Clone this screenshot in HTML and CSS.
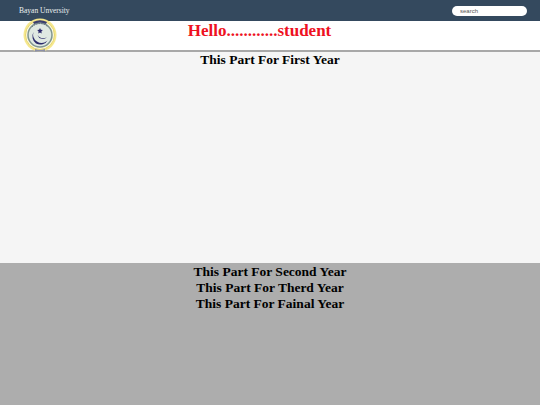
FILE: index.html
```html
<!DOCTYPE html>
<html lang="en">
<head>
<meta charset="utf-8">
<title>Bayan University</title>
<link rel="stylesheet" href="styles.css">
</head>
<body>
<header class="topbar">
  <span class="brand">Bayan Unversity</span>
  <input class="search" type="text" value="search" aria-label="search">
</header>
<div class="hero">
  <svg class="logo" viewBox="0 0 34 34" width="34" height="34" aria-hidden="true">
    <circle cx="17" cy="17" r="16.500" fill="#f6e88e"/>
    <circle cx="17" cy="17" r="14.500" fill="#fbf8df" stroke="#e6d66e" stroke-width="1"/>
    <circle cx="17" cy="17" r="12" fill="#dfe8e2" stroke="#7f958f" stroke-width="1.500"/>
    <path d="M10 4 A15 15 0 0 1 24 4 L23 6 A13 13 0 0 0 11 6 Z" fill="#3b3f6e"/>
    <path d="M12 31 A15 15 0 0 0 22 31 L22 33.500 H12 Z" fill="#8b8fa8"/>
    <path d="M9 9 A11 11 0 0 1 25 9" fill="none" stroke="#5c6a80" stroke-width="1" stroke-dasharray="1.500 1"/>
    <path d="M24 23 A8.500 8.500 0 0 1 10.500 14 A9 9 0 0 0 13 25.500 A9 9 0 0 0 25 22 Z" fill="#2b2a6b"/>
    <path d="M24 19 A5.500 5.500 0 0 1 14.500 17 A6.500 6.500 0 0 0 24 19 Z" fill="#2b2a6b"/>
    <path d="M17 10 l.9 1.800 1.900 .3 -1.400 1.400 .3 1.900 -1.700 -.9 -1.700 .9 .3 -1.900 -1.400 -1.400 1.900 -.3 Z" fill="#2b2a6b"/>
  </svg>
  <h1 class="greeting">Hello............student</h1>
</div>
<section class="first">
  <h2 class="part">This Part For First Year</h2>
</section>
<section class="rest">
  <h2 class="part">This Part For Second Year</h2>
  <h2 class="part">This Part For Therd Year</h2>
  <h2 class="part">This Part For Fainal Year</h2>
</section>
</body>
</html>
```
FILE: styles.css
```css
html, body { margin: 0; padding: 0; }
body {
  width: 540px;
  height: 405px;
  overflow: hidden;
  display: flex;
  flex-direction: column;
  font-family: "Liberation Serif", "Times New Roman", serif;
  color: #000;
  background: #fff;
}
.topbar {
  flex: 0 0 21px;
  display: flex;
  align-items: center;
  justify-content: space-between;
  padding: 0 13px 0 19px;
  background: #34495e;
}
.brand { font-size: 7.500px; color: #ecf0f1; }
.search {
  box-sizing: border-box;
  width: 75px;
  height: 10px;
  padding: 0 8px;
  border: 0;
  border-radius: 5px;
  background: #fff;
  color: #555;
  font-family: "Liberation Sans", Arial, sans-serif;
  font-size: 6px;
}
.hero {
  flex: 0 0 29px;
  position: relative;
  display: flex;
  justify-content: center;
  padding-right: 21px;
  background: #fff;
  border-bottom: 2px solid #a8a8a8;
}
.logo { position: absolute; left: 23px; top: -3px; }
.greeting {
  margin: 0;
  font-size: 17px;
  line-height: 20px;
  color: #ee1122;
}
.first {
  flex: 0 0 211px;
  background: #f5f5f5;
}
.rest {
  flex: 1;
  padding-top: 1px;
  background: #adadad;
}
.part {
  margin: 0;
  font-size: 13.500px;
  line-height: 16px;
  text-align: center;
  color: #000;
}
```
